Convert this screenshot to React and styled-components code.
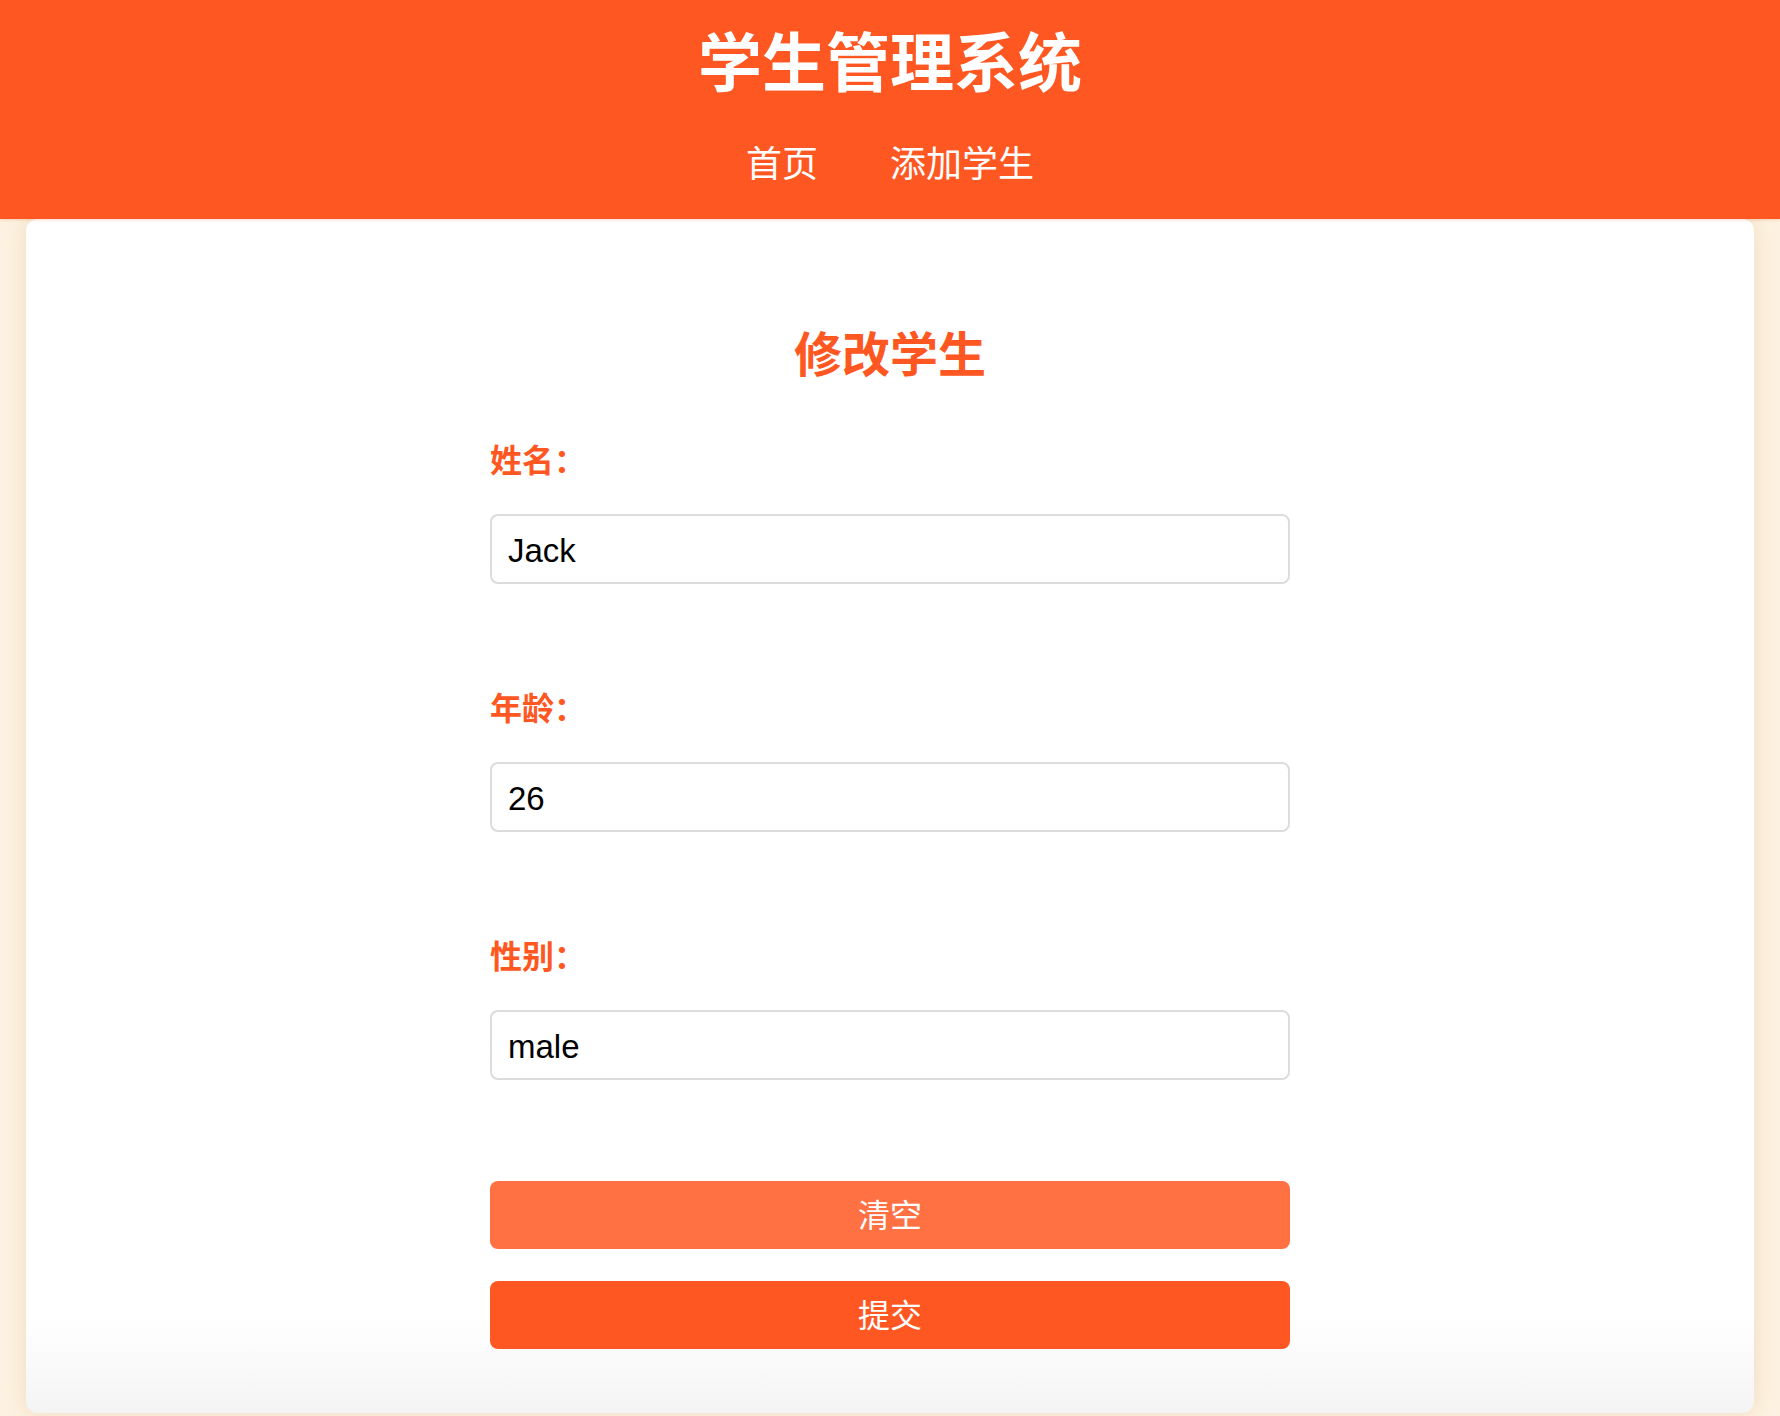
import React from "react";
import styled, { createGlobalStyle } from "styled-components";

const GlobalStyle = createGlobalStyle`
  html, body {
    margin: 0;
    padding: 0;
  }
  body {
    background: #fdf2e1;
    font-family: "Liberation Sans", "Noto Sans CJK SC", sans-serif;
  }
  * { box-sizing: border-box; }
`;

const Page = styled.div`
  min-height: 1416px;
  display: flex;
  flex-direction: column;
`;

const Header = styled.header`
  background: #ff5722;
  color: #fff;
  padding: 20px 0 33px;
  text-align: center;
  box-shadow: 0 1px 3px rgba(200, 60, 10, 0.2);
  position: relative;
  z-index: 1;
`;

const Title = styled.h1`
  margin: 0 0 40px;
  font-family: "Noto Sans CJK SC", sans-serif;
  font-size: 64px;
  font-weight: 700;
  line-height: 76px;
`;

const Nav = styled.nav`
  display: flex;
  justify-content: center;
  gap: 72px;
`;

const NavLink = styled.a`
  color: #fff;
  text-decoration: none;
  font-family: "Noto Sans CJK SC", sans-serif;
  font-size: 36px;
  line-height: 50px;
  font-weight: 400;
`;

const Card = styled.main`
  margin: 0 26px;
  background: linear-gradient(180deg, #ffffff 92%, #f4f4f4 100%);
  border-radius: 12px;
  box-shadow: 0 0 22px rgba(180, 140, 80, 0.22);
  padding: 102px 0 64px;
`;

const Form = styled.form`
  width: 800px;
  margin: 0 auto;
  display: flex;
  flex-direction: column;
`;

const FormTitle = styled.h2`
  margin: 0 0 57px;
  text-align: center;
  color: #ff5722;
  font-family: "Noto Sans CJK SC", sans-serif;
  font-size: 48px;
  font-weight: 700;
  line-height: 60px;
`;

const Field = styled.div`
  display: flex;
  flex-direction: column;
  gap: 36px;
  margin-bottom: 102px;
  &:last-of-type {
    margin-bottom: 101px;
  }
`;

const Label = styled.label`
  color: #ff5722;
  font-family: "Noto Sans CJK SC", sans-serif;
  font-size: 32px;
  font-weight: 700;
  line-height: 40px;
`;

const Input = styled.input`
  height: 70px;
  width: 100%;
  border: 2px solid #dcdcdc;
  border-radius: 8px;
  padding: 3px 16px 0;
  font-family: "Liberation Sans", Arial, sans-serif;
  font-size: 33px;
  color: #000;
  background: #fff;
  outline: none;
`;

const Button = styled.button`
  height: 68px;
  width: 100%;
  border: none;
  border-radius: 8px;
  padding: 0 0 4px;
  background: ${(p) => (p.$light ? "#ff7043" : "#ff5722")};
  color: #fff;
  font-family: "Noto Sans CJK SC", sans-serif;
  font-size: 32px;
  line-height: 1;
  cursor: pointer;
  margin-top: ${(p) => (p.$spaced ? "32px" : "0")};
`;

const fields = [
  { label: "姓名：", value: "Jack" },
  { label: "年龄：", value: "26" },
  { label: "性别：", value: "male" },
];

export default function App() {
  return (
    <Page>
      <GlobalStyle />
      <Header>
        <Title>学生管理系统</Title>
        <Nav>
          <NavLink href="#">首页</NavLink>
          <NavLink href="#">添加学生</NavLink>
        </Nav>
      </Header>
      <Card>
        <Form onSubmit={(e) => e.preventDefault()}>
          <FormTitle>修改学生</FormTitle>
          {fields.map((f) => (
            <Field key={f.label}>
              <Label>{f.label}</Label>
              <Input defaultValue={f.value} />
            </Field>
          ))}
          <Button type="button" $light>清空</Button>
          <Button type="submit" $spaced>提交</Button>
        </Form>
      </Card>
    </Page>
  );
}
